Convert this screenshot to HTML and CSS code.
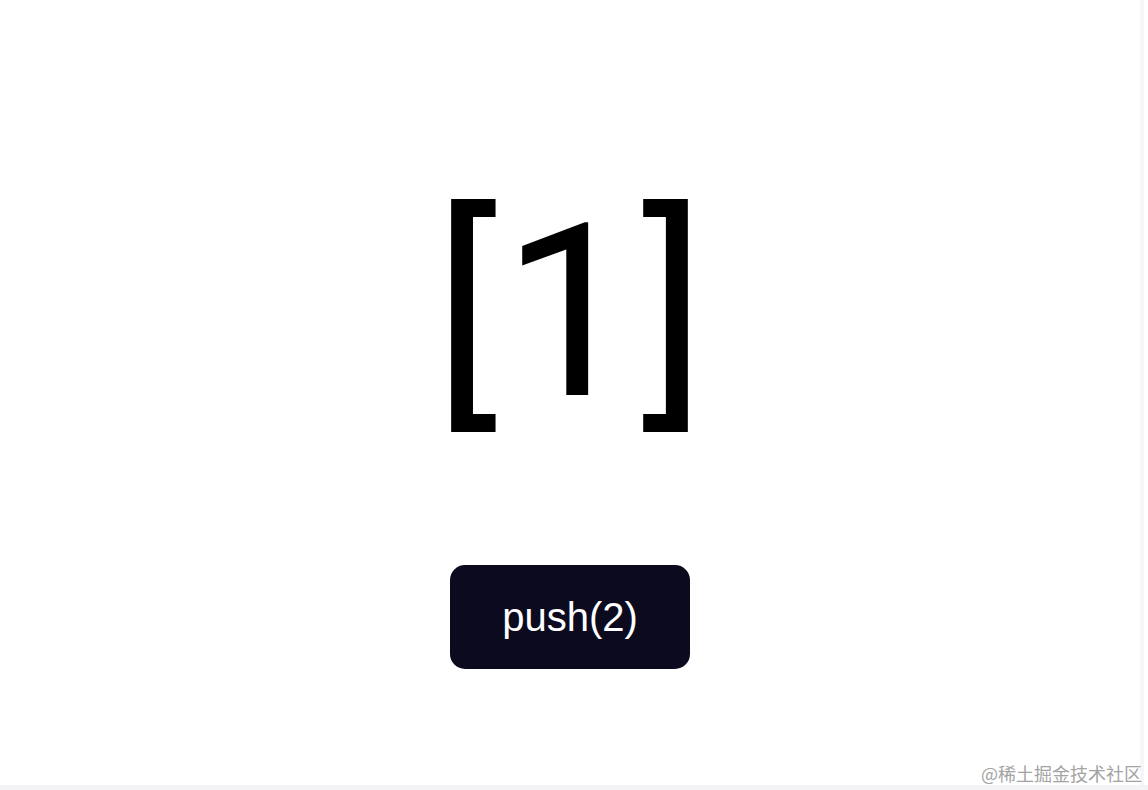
FILE: index.html
```html
<!DOCTYPE html>
<html lang="zh">
<head>
<meta charset="utf-8">
<title>push</title>
<link rel="stylesheet" href="styles.css">
</head>
<body>
<main class="stage">
  <div class="array">[1]</div>
  <button class="push-btn" type="button">push(2)</button>
</main>
<div class="watermark">@稀土掘金技术社区</div>
</body>
</html>
```
FILE: styles.css
```css
html, body {
  margin: 0;
  padding: 0;
  background: #ffffff;
}
body {
  width: 1148px;
  height: 790px;
  overflow: hidden;
  position: relative;
  font-family: "Liberation Sans", Arial, sans-serif;
}
.stage {
  box-sizing: border-box;
  width: 1144px;
  height: 785px;
  border-right: 4px solid #f6f6f8;
  display: flex;
  flex-direction: column;
  align-items: center;
  padding-top: 191px;
}
.array {
  font-family: Roboto, "Liberation Sans", sans-serif;
  font-size: 242px;
  line-height: 1;
  color: #000000;
  height: 242px;
  letter-spacing: 4px;
  padding-left: 4px;
}
.push-btn {
  margin-top: 132px;
  width: 240px;
  height: 104px;
  border: none;
  border-radius: 15px;
  background: #0b0a1f;
  color: #ffffff;
  font-family: "Liberation Sans", Arial, sans-serif;
  font-size: 40px;
  padding: 0;
  cursor: pointer;
}
.watermark {
  position: absolute;
  right: 6px;
  bottom: 5px;
  font-family: "Noto Sans CJK SC", "Liberation Sans", sans-serif;
  font-size: 18px;
  color: #a3a3a3;
  line-height: 24px;
}
body::after {
  content: "";
  position: absolute;
  left: 0;
  right: 0;
  bottom: 0;
  height: 5px;
  background: #f4f4f6;
}
```
